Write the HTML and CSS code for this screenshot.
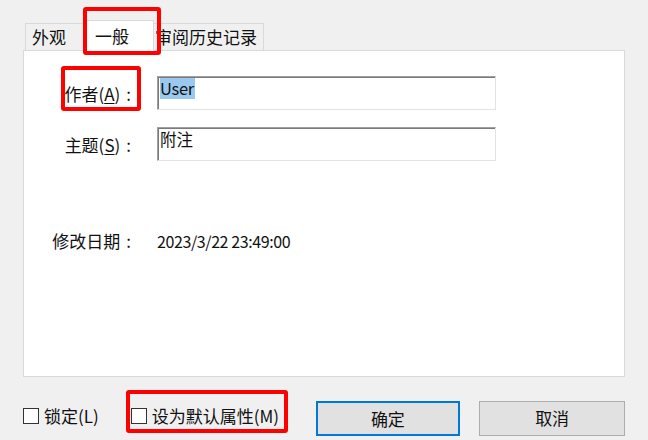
FILE: index.html
```html
<!DOCTYPE html>
<html lang="zh-CN">
<head>
<meta charset="utf-8">
<title>属性</title>
<link rel="stylesheet" href="styles.css">
</head>
<body>
<div class="dialog">
  <div class="tabs">
    <div class="tab tab-look">外观</div>
    <div class="tab tab-general active">一般</div>
    <div class="tab tab-history">审阅历史记录</div>
  </div>
  <div class="panel">
    <div class="row">
      <div class="label">作者(<u>A</u>)<span class="colon">:</span></div>
      <div class="input"><span class="sel">User</span></div>
    </div>
    <div class="row row-subject">
      <div class="label">主题(<u>S</u>)<span class="colon">:</span></div>
      <div class="input">附注</div>
    </div>
    <div class="row row-date">
      <div class="label">修改日期<span class="colon">:</span></div>
      <div class="value">2023/3/22 23:49:00</div>
    </div>
  </div>
  <div class="footer">
    <label class="check check-lock"><span class="box"></span><span>锁定(L)</span></label>
    <label class="check check-default"><span class="box"></span><span>设为默认属性(M)</span></label>
    <div class="btn btn-ok">确定</div>
    <div class="btn btn-cancel">取消</div>
  </div>
  <div class="mark mark-tab"></div>
  <div class="mark mark-author"></div>
  <div class="mark mark-default"></div>
</div>
</body>
</html>
```
FILE: styles.css
```css
html, body {
  margin: 0;
  padding: 0;
  width: 648px;
  height: 440px;
  overflow: hidden;
  background: #f0f0f0;
}

.dialog {
  position: relative;
  width: 648px;
  height: 440px;
  padding: 20px 23px 0 23px;
  box-sizing: border-box;
  font-family: "Noto Sans CJK SC", "Noto Sans", sans-serif;
  font-size: 17px;
  color: #111;
}

.tabs {
  display: flex;
  align-items: flex-end;
  padding-left: 2px;
}

.tab {
  height: 27px;
  box-sizing: border-box;
  border: 1px solid #d9d9d9;
  border-bottom: none;
  background: #f0f0f0;
  line-height: 25px;
  white-space: nowrap;
}

.tab-look {
  width: 58px;
  padding-left: 6px;
  border-right: none;
}

.tab-general {
  width: 71px;
  padding-left: 11px;
}

.tab-history {
  width: 110px;
  padding-left: 1px;
  border-left: none;
  overflow: hidden;
}

.tab.active {
  position: relative;
  z-index: 1;
  height: 31px;
  margin-bottom: -1px;
  background: #fff;
  line-height: 29px;
  border-color: #d9d9d9;
}

.panel {
  height: 327px;
  box-sizing: border-box;
  border: 1px solid #d9d9d9;
  background: #fff;
  padding-top: 25px;
}

.row {
  display: grid;
  grid-template-columns: 115px 339px;
  column-gap: 18px;
  align-items: center;
}

.row-subject {
  margin-top: 17px;
}

.row-date {
  margin-top: 67px;
}

.label {
  text-align: right;
  white-space: nowrap;
}

.colon {
  padding: 0 8px 0 6px;
}

.label u {
  text-underline-offset: 2px;
}

.input {
  height: 34px;
  box-sizing: border-box;
  border: 1px solid;
  border-color: #a0a0a0 #e3e3e3 #e3e3e3 #a0a0a0;
  box-shadow: inset 1px 1px 0 #7a7a7a;
  padding: 1px 0 0 2px;
  line-height: 21px;
  background: #fff;
  font-size: 16.5px;
}

.sel {
  background: #99c9ef;
  display: inline-block;
  padding: 0 1px 0 0;
  letter-spacing: -0.3px;
}

.value {
  line-height: 22px;
  font-size: 16px;
  letter-spacing: -0.4px;
}

.footer {
  display: flex;
  align-items: flex-start;
  margin-top: 24px;
}

.check {
  display: flex;
  align-items: center;
  gap: 5px;
  margin-top: 2px;
  white-space: nowrap;
}

.check-lock {
  width: 108px;
}

.check-default {
  width: 185px;
}

.box {
  width: 16px;
  height: 16px;
  box-sizing: border-box;
  border: 1px solid #333;
  background: #fff;
}

.btn {
  height: 35px;
  box-sizing: border-box;
  border: 1px solid #adadad;
  background: #e1e1e1;
  text-align: center;
  line-height: 32px;
}

.btn-ok {
  width: 145px;
  border: 2px solid #0078d7;
  line-height: 31px;
}

.btn-cancel {
  width: 146px;
  margin-left: 19px;
}

.mark {
  position: absolute;
  border: 4px solid #f00;
  border-radius: 3px;
  box-sizing: border-box;
  z-index: 2;
}

.mark-tab {
  left: 83px;
  top: 7px;
  width: 78px;
  height: 48px;
}

.mark-author {
  left: 61px;
  top: 66px;
  width: 80px;
  height: 45px;
}

.mark-default {
  left: 126px;
  top: 390px;
  width: 162px;
  height: 43px;
}
```
